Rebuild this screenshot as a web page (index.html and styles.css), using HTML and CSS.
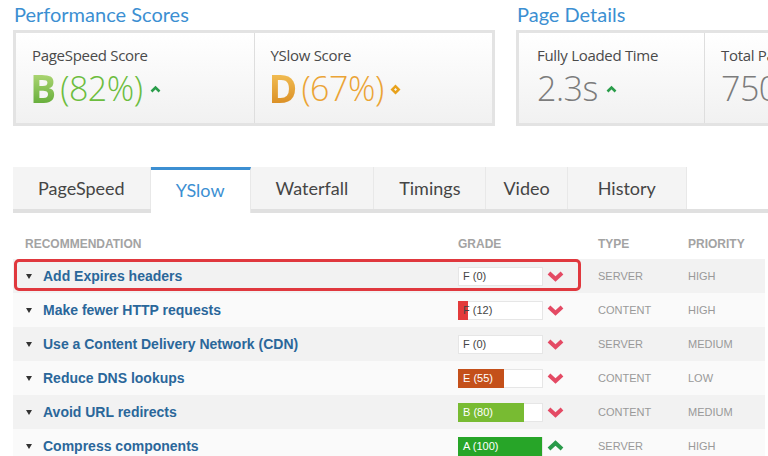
FILE: index.html
```html
<!DOCTYPE html>
<html>
<head>
<meta charset="utf-8">
<link rel="stylesheet" href="styles.css">
</head>
<body>
<div class="top">
  <section class="group g1">
    <h2 class="title">Performance Scores</h2>
    <div class="card">
      <div class="cell">
        <div class="label">PageSpeed Score</div>
        <div class="score">
          <span class="letter green">B</span><span class="pct pct-green">(82%)</span>
          <svg class="caret" width="11" height="8" viewBox="0 0 11 8"><path d="M1.5 6.5 L5.5 2.5 L9.5 6.5" fill="none" stroke="#2a9d4a" stroke-width="2.6"/></svg>
        </div>
      </div>
      <div class="cell">
        <div class="label">YSlow Score</div>
        <div class="score">
          <span class="letter orange">D</span><span class="pct pct-orange">(67%)</span>
          <svg class="diamond" width="11" height="11" viewBox="0 0 11 11"><path d="M5.5 0.5 L10.5 5.5 L5.5 10.5 L0.5 5.5 Z M5.5 4 L4 5.5 L5.5 7 L7 5.5 Z" fill="#e8a21c" fill-rule="evenodd"/></svg>
        </div>
      </div>
    </div>
  </section>
  <section class="group g2">
    <h2 class="title">Page Details</h2>
    <div class="card card2">
      <div class="cell cell-wide">
        <div class="label">Fully Loaded Time</div>
        <div class="score">
          <span class="pct pct-gray">2.3s</span>
          <svg class="caret" width="11" height="8" viewBox="0 0 11 8"><path d="M1.5 6.5 L5.5 2.5 L9.5 6.5" fill="none" stroke="#2a9d4a" stroke-width="2.6"/></svg>
        </div>
      </div>
      <div class="cell">
        <div class="label">Total Page Size</div>
        <div class="score"><span class="pct pct-gray">750KB</span></div>
      </div>
    </div>
  </section>
</div>

<nav class="tabs">
  <div class="tab">PageSpeed</div>
  <div class="tab active">YSlow</div>
  <div class="tab">Waterfall</div>
  <div class="tab">Timings</div>
  <div class="tab tab-narrow">Video</div>
  <div class="tab tab-wide">History</div>
</nav>

<div class="table">
  <div class="row head">
    <div class="c-rec">RECOMMENDATION</div>
    <div class="c-grade">GRADE</div>
    <div class="c-type">TYPE</div>
    <div class="c-prio">PRIORITY</div>
  </div>
  <div class="row shade highlight">
    <div class="c-rec"><span class="tri"></span><span class="name">Add Expires headers</span></div>
    <div class="c-grade"><div class="bar"><div class="fill" style="width:0px"></div><span class="btxt">F (0)</span></div><svg class="chev" width="17" height="12" viewBox="0 0 17 12"><path d="M2 3 L8.5 9 L15 3" fill="none" stroke="#e44a64" stroke-width="4"/></svg></div>
    <div class="c-type">SERVER</div>
    <div class="c-prio">HIGH</div>
  </div>
  <div class="row">
    <div class="c-rec"><span class="tri"></span><span class="name">Make fewer HTTP requests</span></div>
    <div class="c-grade"><div class="bar"><div class="fill f-red" style="width:10px"></div><span class="btxt">F (12)</span></div><svg class="chev" width="17" height="12" viewBox="0 0 17 12"><path d="M2 3 L8.5 9 L15 3" fill="none" stroke="#e44a64" stroke-width="4"/></svg></div>
    <div class="c-type">CONTENT</div>
    <div class="c-prio">HIGH</div>
  </div>
  <div class="row shade">
    <div class="c-rec"><span class="tri"></span><span class="name">Use a Content Delivery Network (CDN)</span></div>
    <div class="c-grade"><div class="bar"><div class="fill" style="width:0px"></div><span class="btxt">F (0)</span></div><svg class="chev" width="17" height="12" viewBox="0 0 17 12"><path d="M2 3 L8.5 9 L15 3" fill="none" stroke="#e44a64" stroke-width="4"/></svg></div>
    <div class="c-type">SERVER</div>
    <div class="c-prio">MEDIUM</div>
  </div>
  <div class="row">
    <div class="c-rec"><span class="tri"></span><span class="name">Reduce DNS lookups</span></div>
    <div class="c-grade"><div class="bar"><div class="fill f-orange" style="width:46px"></div><span class="btxt light">E (55)</span></div><svg class="chev" width="17" height="12" viewBox="0 0 17 12"><path d="M2 3 L8.5 9 L15 3" fill="none" stroke="#e44a64" stroke-width="4"/></svg></div>
    <div class="c-type">CONTENT</div>
    <div class="c-prio">LOW</div>
  </div>
  <div class="row shade">
    <div class="c-rec"><span class="tri"></span><span class="name">Avoid URL redirects</span></div>
    <div class="c-grade"><div class="bar"><div class="fill f-lime" style="width:66px"></div><span class="btxt light">B (80)</span></div><svg class="chev" width="17" height="12" viewBox="0 0 17 12"><path d="M2 3 L8.5 9 L15 3" fill="none" stroke="#e44a64" stroke-width="4"/></svg></div>
    <div class="c-type">CONTENT</div>
    <div class="c-prio">MEDIUM</div>
  </div>
  <div class="row">
    <div class="c-rec"><span class="tri"></span><span class="name">Compress components</span></div>
    <div class="c-grade"><div class="bar"><div class="fill f-green" style="width:84px"></div><span class="btxt light">A (100)</span></div><svg class="chev" width="17" height="12" viewBox="0 0 17 12"><path d="M2 9 L8.5 3 L15 9" fill="none" stroke="#2a9a4a" stroke-width="4"/></svg></div>
    <div class="c-type">SERVER</div>
    <div class="c-prio">HIGH</div>
  </div>
</div>
</body>
</html>
```

FILE: styles.css
```css
html, body {
  margin: 0;
  padding: 0;
  background: #fff;
  overflow: hidden;
  width: 768px;
  height: 456px;
}
body {
  font-family: "Liberation Sans", Arial, sans-serif;
}
.top {
  display: flex;
  gap: 21px;
  padding-left: 13px;
  width: 900px;
}
.title {
  margin: 0;
  height: 30px;
  font-family: "Lato", "Open Sans", sans-serif;
  font-weight: 400;
  font-size: 20px;
  line-height: 30px;
  color: #3c8fd2;
  padding-left: 1px;
  margin-top: -1px;
  margin-bottom: 1px;
}
.g1 { width: 482px; }
.g2 { width: 330px; }
.card {
  display: flex;
  box-sizing: border-box;
  height: 96px;
  border: 3px solid #e3e3e3;
  background: linear-gradient(#ffffff, #f1f1f1);
}
.cell {
  flex: 1;
  box-sizing: border-box;
  padding: 11px 0 0 16px;
  border-right: 1px solid #dedede;
}
.cell:last-child { border-right: 0; }
.card2 .cell-wide { flex: 0 0 186px; padding-left: 18px; }
.label {
  font-family: "Open Sans", sans-serif;
  font-size: 15px;
  color: #4a4a4a;
  line-height: 22px;
  letter-spacing: -0.3px;
}
.score {
  display: flex;
  align-items: center;
  height: 44px;
}
.letter {
  font-family: "Open Sans", sans-serif;
  font-weight: 700;
  font-size: 39px;
  line-height: 44px;
  margin-left: -2px;
}
.green {
  background: linear-gradient(#bfe082, #58a630);
  -webkit-background-clip: text;
  background-clip: text;
  color: transparent;
}
.orange {
  background: linear-gradient(#f7c85e, #d6861c);
  -webkit-background-clip: text;
  background-clip: text;
  color: transparent;
}
.pct {
  font-family: "Open Sans", sans-serif;
  font-weight: 300;
  font-size: 34px;
  line-height: 44px;
  letter-spacing: -0.5px;
}
.pct-green { color: #6cbd3e; margin-left: 4px; }
.pct-orange { color: #eba435; margin-left: 4px; }
.pct-gray { color: #7c7c7c; }
.caret { margin-left: 8px; margin-top: 2px; }
.diamond { margin-left: 6px; margin-top: 2px; }

.tabs {
  display: flex;
  margin: 41px 0 0 13px;
  border-bottom: 4px solid #e0e0e0;
  height: 42px;
}
.tab {
  box-sizing: border-box;
  height: 42px;
  line-height: 43px;
  padding: 0 25px;
  background: #f4f4f4;
  border-right: 1px solid #e8e8e8;
  font-family: "Lato", "Open Sans", sans-serif;
  font-size: 18px;
  color: #454545;
}
.tab.tab-narrow { padding: 0 17px; }
.tab.tab-wide { padding: 0 30px; }
.tab.active {
  background: #fff;
  color: #3c8fd2;
  border-top: 3px solid #3c8fd2;
  height: 46px;
  line-height: 41px;
  margin-bottom: -4px;
}

.table {
  margin: 16px 3px 0 13px;
}
.row {
  display: flex;
  align-items: center;
  height: 34px;
  background: #fafafa;
  position: relative;
}
.row.shade { background: #f2f2f2; }
.row.head {
  background: #fff;
  height: 30px;
  font-weight: 700;
  font-size: 12px;
  color: #a3a3a3;
}
.c-rec {
  width: 433px;
  box-sizing: border-box;
  padding-left: 12px;
  display: flex;
  align-items: center;
}
.c-grade {
  width: 140px;
  box-sizing: border-box;
  padding-left: 12px;
  display: flex;
  align-items: center;
}
.c-type {
  width: 90px;
  box-sizing: border-box;
  padding-left: 12px;
}
.c-prio {
  padding-left: 12px;
}
.row:not(.head) .c-type, .row:not(.head) .c-prio {
  font-size: 11px;
  color: #999;
}
.tri {
  width: 0;
  height: 0;
  border-left: 3.5px solid transparent;
  border-right: 3.5px solid transparent;
  border-top: 5px solid #333;
  margin: 1px 11px 0 1px;
}
.name {
  font-weight: 700;
  font-size: 14px;
  color: #2a679a;
}
.bar {
  position: relative;
  box-sizing: border-box;
  width: 85px;
  height: 19px;
  background: #fff;
  border: 1px solid #e6e6e6;
  display: flex;
  align-items: center;
}
.fill {
  position: absolute;
  left: -1px;
  top: -1px;
  bottom: -1px;
}
.f-red { background: #e33b3b; }
.f-orange { background: #c4501a; }
.f-lime { background: #78bb32; }
.f-green { background: #27a528; }
.btxt {
  position: relative;
  font-size: 11px;
  color: #444;
  padding-left: 4px;
}
.btxt.light { color: #fff; }
.chev { margin-left: 4px; }
.highlight::after {
  content: "";
  position: absolute;
  left: 1px;
  top: 0;
  width: 567px;
  height: 32px;
  box-sizing: border-box;
  border: 3px solid #e0383e;
  border-radius: 5px;
}
```
